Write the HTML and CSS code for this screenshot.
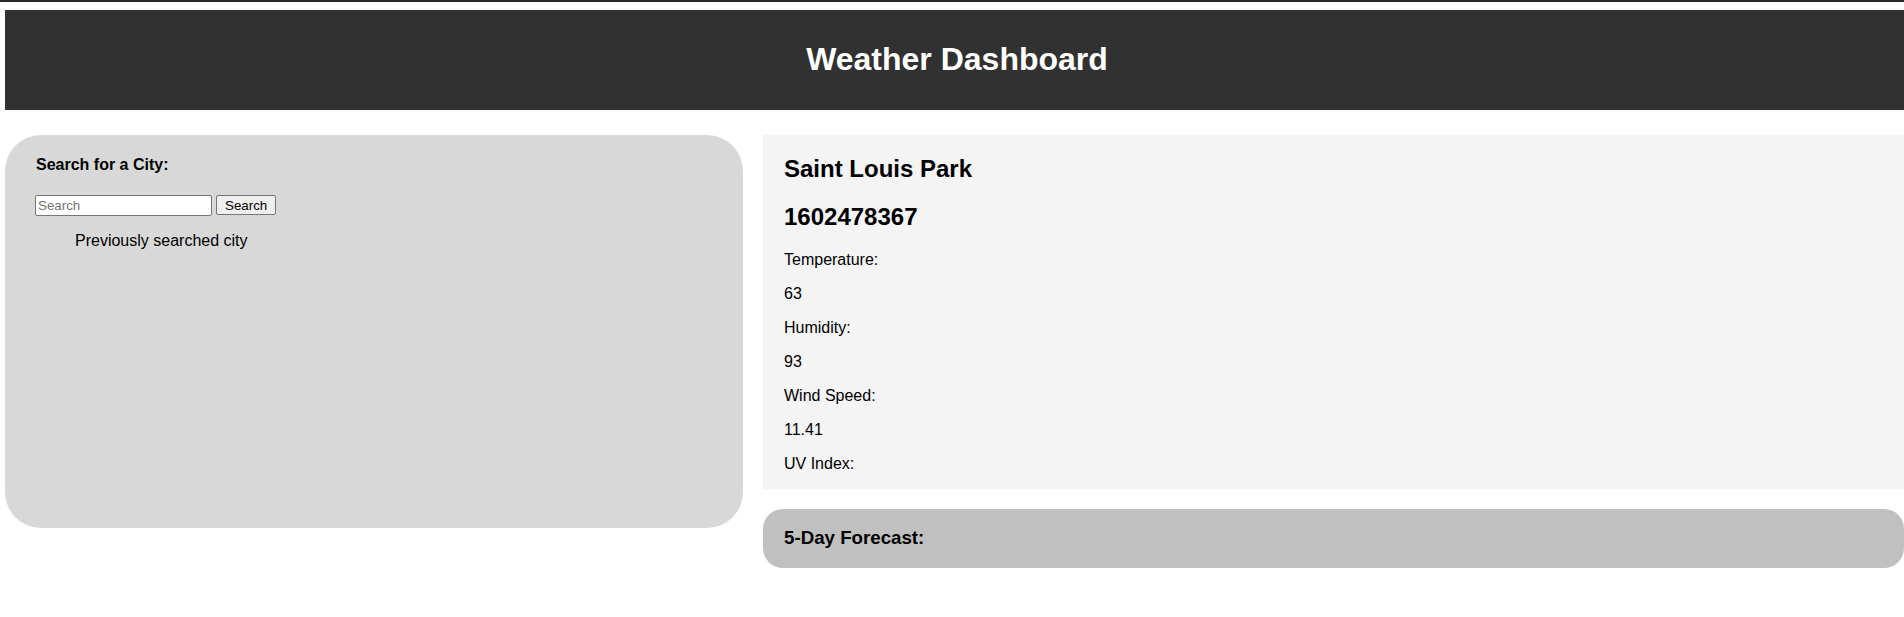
FILE: index.html
```html
<!DOCTYPE html>
<html lang="en">
<head>
<meta charset="utf-8">
<title>Weather Dashboard</title>
<link rel="stylesheet" href="styles.css">
</head>
<body>
<div class="topbar"></div>
<div class="page">
  <header class="header">
    <h1 class="header-title">Weather Dashboard</h1>
  </header>
  <main class="content">
    <section class="search-panel">
      <h4 class="search-title">Search for a City:</h4>
      <form class="search-form">
        <input class="search-input" type="text" placeholder="Search">
        <button class="search-button" type="button">Search</button>
      </form>
      <ul class="history">
        <li class="history-item">Previously searched city</li>
      </ul>
    </section>
    <section class="weather-column">
      <div class="current">
        <h2 class="current-heading">Saint Louis Park</h2>
        <h2 class="current-heading">1602478367</h2>
        <p class="stat">Temperature:</p>
        <p class="stat">63</p>
        <p class="stat">Humidity:</p>
        <p class="stat">93</p>
        <p class="stat">Wind Speed:</p>
        <p class="stat">11.41</p>
        <p class="stat">UV Index:</p>
      </div>
      <div class="forecast">
        <h3 class="forecast-title">5-Day Forecast:</h3>
      </div>
    </section>
  </main>
</div>
</body>
</html>
```

FILE: styles.css
```css
html, body {
  margin: 0;
  padding: 0;
  overflow: hidden;
  background: #ffffff;
  font-family: "Liberation Sans", Arial, sans-serif;
  color: #000000;
}

.topbar {
  height: 2px;
  background: #2a2a2a;
}

.page {
  padding-left: 5px;
}

.header {
  margin-top: 8px;
  margin-right: -5px;
  height: 100px;
  box-sizing: border-box;
  padding-top: 31px;
  background: #313131;
  color: #ffffff;
  text-align: center;
}

.header-title {
  margin: 0;
  font-size: 32px;
  font-weight: bold;
}

.content {
  display: flex;
  align-items: flex-start;
  gap: 20px;
  margin-top: 25px;
}

.search-panel {
  flex: 0 0 738px;
  height: 393px;
  box-sizing: border-box;
  padding: 0 30px;
  background: #d8d8d8;
  border-radius: 36px;
  display: flow-root;
}

.search-title {
  margin: 21px 0 20.6px 1px;
  font-size: 16px;
  font-weight: bold;
}

.search-form {
  display: flex;
  align-items: center;
  gap: 4px;
  margin: 0;
}

.search-input {
  width: 177px;
  height: 21px;
  box-sizing: border-box;
  font-family: "Liberation Sans", Arial, sans-serif;
  font-size: 13.33px;
  padding: 1px 2px;
  border: 1px solid #767676;
  border-radius: 2px;
  background: #ffffff;
}

.search-input::placeholder {
  color: #757575;
}

.search-button {
  height: 20px;
  box-sizing: border-box;
  font-family: "Liberation Sans", Arial, sans-serif;
  font-size: 13.33px;
  padding: 1px 8px;
  border: 1px solid #767676;
  border-radius: 2px;
  background: #efefef;
  color: #000000;
}

.history {
  list-style: none;
  margin: 16px 0 0;
  padding-left: 40px;
}

.history-item {
  font-size: 16px;
}

.weather-column {
  flex: 1 1 auto;
  display: flex;
  flex-direction: column;
  gap: 20px;
}

.current {
  display: flow-root;
  background: #f4f4f4;
  padding: 0 21px;
}

.current-heading {
  font-size: 24px;
  font-weight: bold;
  margin: 19.92px 0;
}

.stat {
  font-size: 16px;
  line-height: 18px;
  margin: 16px 0;
}

.forecast {
  display: flow-root;
  background: #c0c0c0;
  border-radius: 20px;
  padding: 0 21px;
}

.forecast-title {
  font-size: 18.72px;
  font-weight: bold;
  margin: 18.72px 0;
}
```
